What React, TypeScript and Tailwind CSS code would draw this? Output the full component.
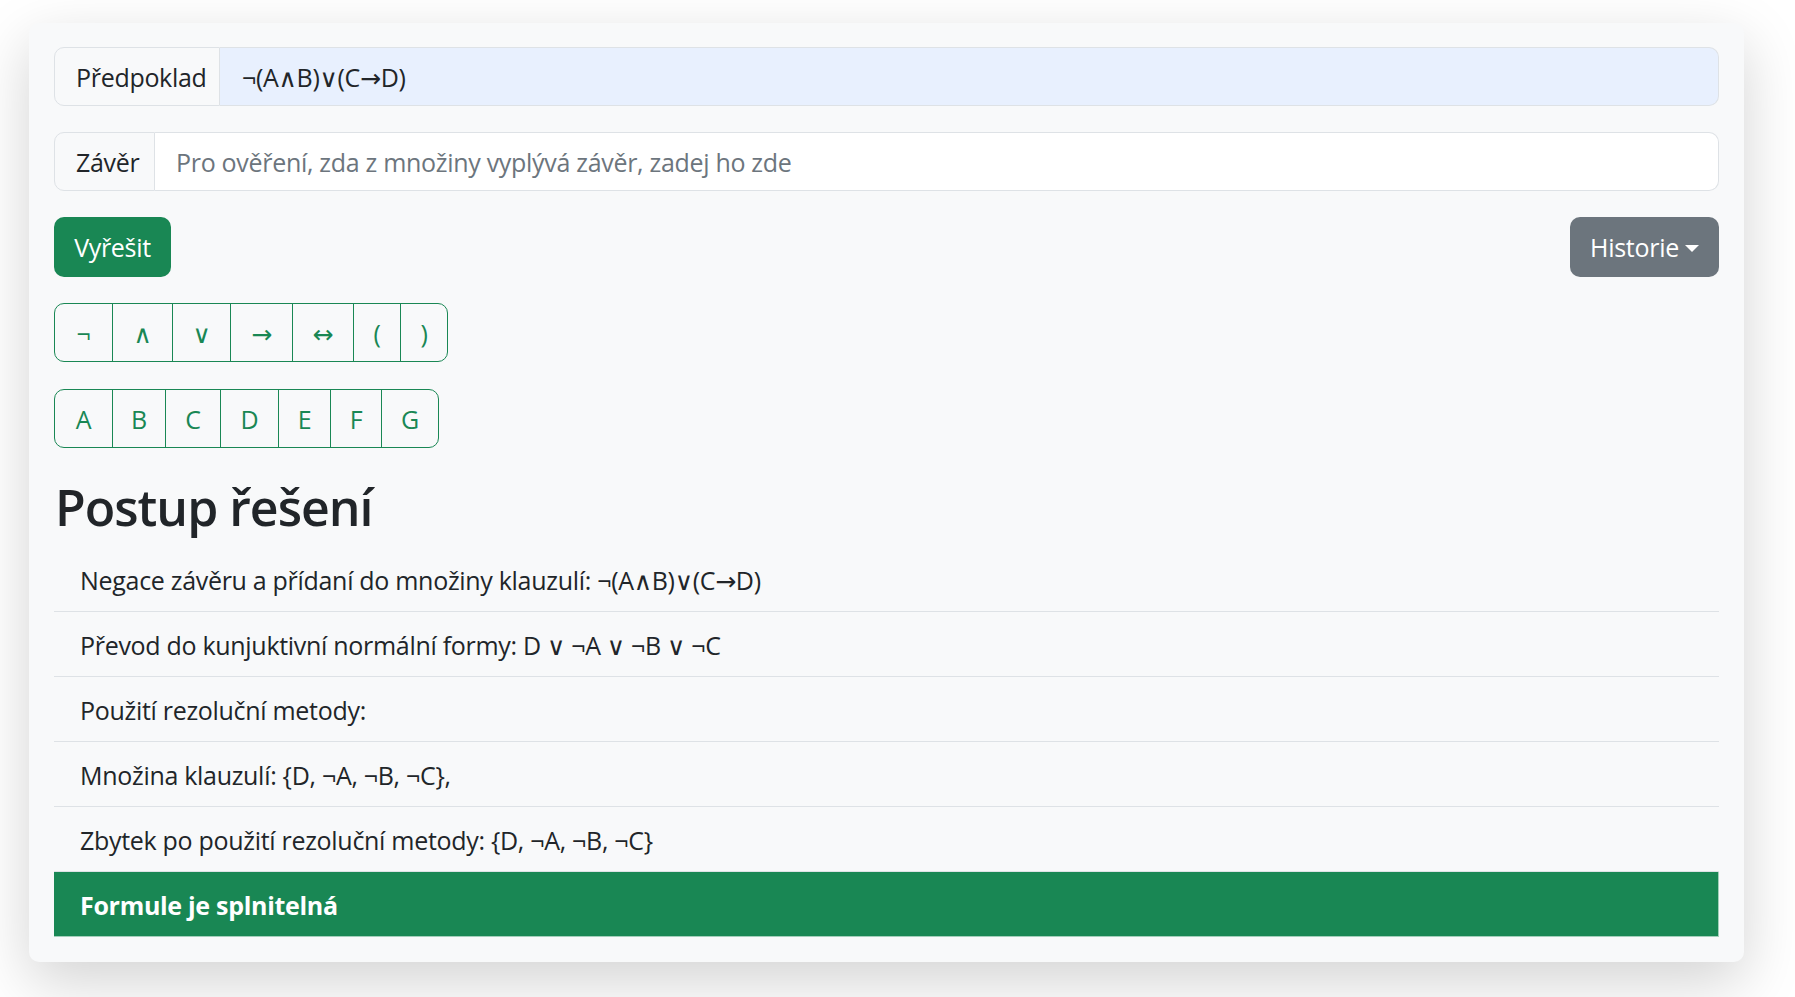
const OPERATORS = [
  { label: '¬', w: 'w-[57px]' },
  { label: '∧', w: 'w-[60px]' },
  { label: '∨', w: 'w-[58px]' },
  { label: '→', w: 'w-[62px]' },
  { label: '↔', w: 'w-[61px]' },
  { label: '(', w: 'w-[47px]' },
  { label: ')', w: 'w-[47px]' },
]

const LETTERS = [
  { label: 'A', w: 'w-[57px]' },
  { label: 'B', w: 'w-[53px]' },
  { label: 'C', w: 'w-[55px]' },
  { label: 'D', w: 'w-[58px]' },
  { label: 'E', w: 'w-[52px]' },
  { label: 'F', w: 'w-[51px]' },
  { label: 'G', w: 'w-[57px]' },
]

const STEPS = [
  'Negace závěru a přídaní do množiny klauzulí: ¬(A∧B)∨(C→D)',
  'Převod do kunjuktivní normální formy: D ∨ ¬A ∨ ¬B ∨ ¬C',
  'Použití rezoluční metody:',
  'Množina klauzulí: {D, ¬A, ¬B, ¬C},',
  'Zbytek po použití rezoluční metody: {D, ¬A, ¬B, ¬C}',
]

function KeyGroup({ keys }: { keys: { label: string; w: string }[] }) {
  return (
    <div className="inline-flex h-[59px] rounded-[10px] border border-[#198754] overflow-hidden">
      {keys.map((k, i) => (
        <button
          key={k.label}
          className={`${k.w} h-full flex items-center justify-center pt-[2px] text-[25px] text-[#198754] ${i > 0 ? 'border-l border-[#198754]' : ''}`}
        >
          {k.label}
        </button>
      ))}
    </div>
  )
}

export default function App() {
  return (
    <div className="min-h-screen bg-white pt-[23px] pl-[29px] font-['Segoe_UI','Open_Sans','DejaVu_Sans',sans-serif] tracking-[-0.3px] text-[#212529]">
      <div className="w-[1715px] rounded-[10px] bg-[#f8f9fa] shadow-[0_20px_60px_rgba(0,0,0,0.175)] px-[25px] pt-[24px] pb-[25px]">

        {/* premise */}
        <div className="flex h-[59px] text-[25px]">
          <div className="w-[166px] shrink-0 flex items-center pl-[21px] pt-[2px] rounded-l-[10px] border border-[#dee2e6] bg-[#f8f9fa]">
            Předpoklad
          </div>
          <div className="flex-1 flex items-center pl-[22px] pt-[2px] rounded-r-[10px] border border-l-0 border-[#dee2e6] bg-[#e8f0fe]">
            ¬(A∧B)∨(C→D)
          </div>
        </div>

        {/* conclusion */}
        <div className="flex h-[59px] mt-[26px] text-[25px]">
          <div className="w-[101px] shrink-0 flex items-center pl-[21px] pt-[2px] rounded-l-[10px] border border-[#dee2e6] bg-[#f8f9fa]">
            Závěr
          </div>
          <div className="flex-1 flex items-center pl-[21px] pt-[2px] rounded-r-[10px] border border-l-0 border-[#dee2e6] bg-white text-[#6c757d]">
            Pro ověření, zda z množiny vyplývá závěr, zadej ho zde
          </div>
        </div>

        {/* actions */}
        <div className="flex items-center mt-[26px] h-[60px]">
          <button className="w-[117px] h-[60px] pt-[2px] rounded-[10px] bg-[#198754] text-white text-[25px]">
            Vyřešit
          </button>
          <button className="ml-auto w-[149px] h-[60px] pt-[2px] rounded-[10px] bg-[#6c757d] text-white text-[25px] flex items-center justify-center gap-[6px]">
            Historie
            <span className="w-0 h-0 border-x-[7.5px] border-x-transparent border-t-[7.5px] border-t-white" />
          </button>
        </div>

        <div className="mt-[26px]">
          <KeyGroup keys={OPERATORS} />
        </div>
        <div className="mt-[27px]">
          <KeyGroup keys={LETTERS} />
        </div>

        <h1 className="mt-[29px] h-[60px] text-[50px] leading-[60px] font-semibold tracking-[-1px] pl-[1px]">Postup řešení</h1>

        <ul className="mt-[10px]">
          {STEPS.map(s => (
            <li key={s} className="h-[65px] flex items-center px-[26px] pt-[4px] border-b border-[#dee2e6] text-[25px]">
              {s}
            </li>
          ))}
          <li className="h-[65px] flex items-center px-[26px] pt-[4px] bg-[#198754] border-r border-b border-[#a3cfbb] text-white font-bold text-[25px]">
            Formule je splnitelná
          </li>
        </ul>
      </div>
    </div>
  )
}
